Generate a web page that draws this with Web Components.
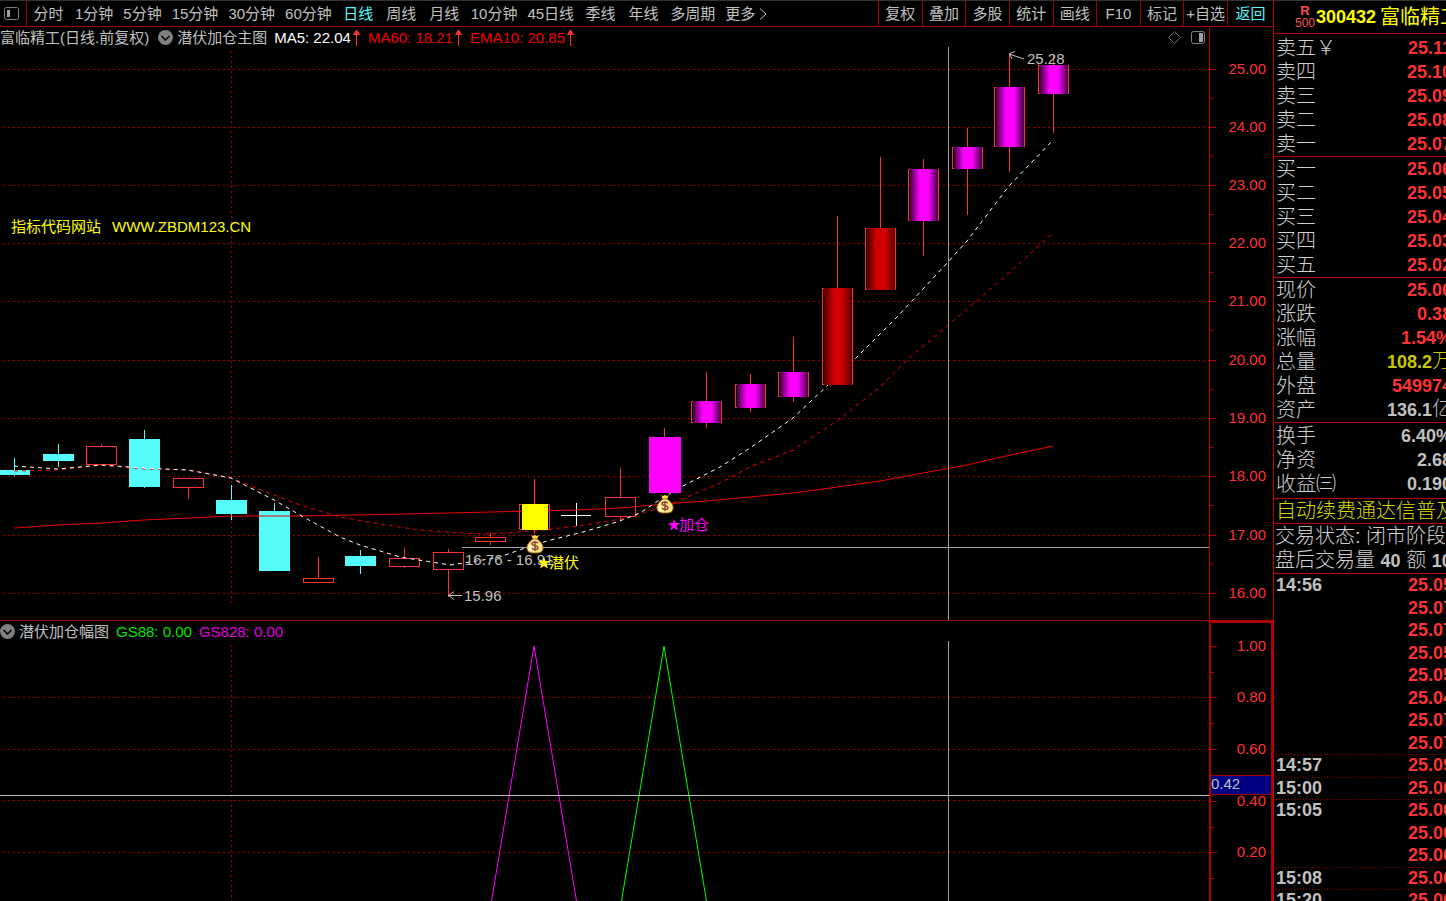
<!DOCTYPE html>
<html lang="zh-CN">
<head>
<meta charset="utf-8">
<title>富临精工 300432</title>
<style>
    html, body {
        margin: 0;
        height: 100%;
        background: #000;
        overflow: hidden;
    }
    body {
        font-family: "Liberation Sans", "Noto Sans CJK SC", sans-serif;
        font-size: 15px;
        font-weight: 400;
        color: #c0c0c0;
    }
</style>
</head>
<body>
<trade-app></trade-app>

<script>
const define = (name, cls) => customElements.define(name, cls);

class PeriodBar extends HTMLElement {
    constructor() {
        super();
        this.attachShadow({ mode: 'open' });
        this.periods = ['分时', '1分钟', '5分钟', '15分钟', '30分钟', '60分钟', '日线', '周线',
            '月线', '10分钟', '45日线', '季线', '年线', '多周期', '更多'];
        this.tools = ['复权', '叠加', '多股', '统计', '画线', 'F10', '标记', '+自选', '返回'];
    }

    connectedCallback() {
        this.shadowRoot.innerHTML = `
            <style>
                :host {
                    display: flex;
                    height: 27px;
                    box-sizing: border-box;
                    border-top: 1px solid #333;
                    border-bottom: 1px solid #a00000;
                }
                button {
                    border: 0;
                    padding: 0 5px;
                    background: none;
                    color: inherit;
                    font: inherit;
                    line-height: 24px;
                    white-space: nowrap;
                    cursor: pointer;
                }
                .layout {
                    width: 26px;
                    padding: 0 4px;
                    flex: none;
                }
                .layout svg { display: block; }
                nav {
                    flex: 1;
                    display: flex;
                    min-width: 0;
                    overflow: hidden;
                    border-left: 1px solid #a00000;
                }
                nav button { min-width: 43px; }
                .more { display: flex; align-items: center; gap: 4px; }
                .tools {
                    display: grid;
                    grid-template-columns: repeat(8, 1fr) 46px;
                    flex: 0 0 395px;
                }
                .tools button {
                    padding: 0;
                    border-left: 1px solid #a00000;
                }
                .on { color: #54fcfc; }
            </style>
            <button class="layout" aria-label="布局">
                <svg width="16" height="24" fill="none" stroke="#808080">
                    <rect x=".5" y="5.5" width="14" height="12" rx="2"/>
                    <rect x="3" y="8" width="3" height="7" fill="#a0a0a0" stroke="none"/>
                </svg>
            </button>
            <nav>${this.periods.map(p => this.renderPeriod(p)).join('')}</nav>
            <div class="tools">
                ${this.tools.map(t => `<button class="${t === '返回' ? 'on' : ''}">${t}</button>`).join('')}
            </div>
        `;
    }

    renderPeriod(p) {
        if (p === '更多') {
            return `<button class="more">更多<svg width="8" height="14" fill="none" stroke="#c0c0c0"><path d="M1 1.500L7 7L1 12.500"/></svg></button>`;
        }
        return `<button class="${p === '日线' ? 'on' : ''}">${p}</button>`;
    }
}
define('period-bar', PeriodBar);

// title row and plot on the left, value axis on the right
class ChartPanel extends HTMLElement {
    constructor() {
        super();
        this.attachShadow({ mode: 'open' });
        this.shadowRoot.innerHTML = `
            <style>
                :host { display: flex; min-height: 0; overflow: hidden; }
                .left { flex: 1; min-width: 0; display: flex; flex-direction: column; }
                header {
                    display: flex;
                    align-items: center;
                    height: 20px;
                    line-height: 20px;
                    padding-top: 1px;
                    box-sizing: border-box;
                    white-space: nowrap;
                }
                .plot { flex: 1; min-height: 0; }
            </style>
            <div class="left">
                <header><slot name="title"></slot></header>
                <div class="plot"><slot></slot></div>
            </div>
            <slot name="axis"></slot>
        `;
    }
}
define('chart-panel', ChartPanel);

class IndicatorMenu extends HTMLElement {
    constructor() {
        super();
        this.attachShadow({ mode: 'open' });
        this.shadowRoot.innerHTML = `
            <style>
                :host { display: block; }
                button {
                    display: flex;
                    align-items: center;
                    gap: 4px;
                    border: 0;
                    padding: 0;
                    background: none;
                    color: inherit;
                    font: inherit;
                    line-height: 20px;
                    cursor: pointer;
                }
            </style>
            <button>
                <svg width="15" height="15">
                    <circle cx="7.500" cy="7.500" r="7.500" fill="#808080"/>
                    <path d="M3.500 6L7.500 10L11.500 6" fill="none" stroke="#000" stroke-width="1.500"/>
                </svg>
                <slot></slot>
            </button>
        `;
    }
}
define('indicator-menu', IndicatorMenu);

class IndicatorValue extends HTMLElement {
    constructor() {
        super();
        this.attachShadow({ mode: 'open' });
        this.shadowRoot.innerHTML = `
            <style>
                :host { display: flex; align-items: center; gap: 1px; margin-left: 7px; }
                svg { display: none; }
                :host([up]) svg { display: block; }
            </style>
            <slot></slot>
            <svg width="9" height="18"><path d="M4.500 2V17M1.500 5.500H7.500L4.500 1Z" fill="#ff3232" stroke="#ff3232"/></svg>
        `;
    }
}
define('indicator-value', IndicatorValue);

class WindowIcons extends HTMLElement {
    constructor() {
        super();
        this.attachShadow({ mode: 'open' });
        this.shadowRoot.innerHTML = `
            <style>
                :host { display: flex; align-items: center; gap: 8px; margin-left: auto; padding-right: 3px; }
                button { border: 0; padding: 0; background: none; cursor: pointer; }
                svg { display: block; }
            </style>
            <button aria-label="标记"><svg width="15" height="15" fill="none" stroke="#707070"><path d="M7.500 1.500L13.500 7.500L7.500 13.500L1.500 7.500Z"/></svg></button>
            <button aria-label="侧栏"><svg width="16" height="15" fill="none" stroke="#808080"><rect x="1.500" y="1.500" width="13" height="12" rx="2"/><rect x="9" y="3" width="4" height="9" fill="#a0a0a0" stroke="none"/></svg></button>
        `;
    }
}
define('window-icons', WindowIcons);

const GRID = 'stroke="#a00000" stroke-dasharray="2 3"';

// every candle: kind, centre x, high, body top, body bottom, low
const CANDLES = [
    ['down', 14, 458, 470, 475, 476],
    ['down', 58, 444, 454, 461, 467],
    ['up', 101, 444, 446, 465, 465],
    ['down', 144, 430, 439, 487, 488],
    ['up', 188, 478, 478, 488, 499],
    ['down', 231, 485, 500, 514, 520],
    ['down', 274, 503, 511, 571, 571],
    ['up', 318, 557, 578, 583, 583],
    ['down', 360, 550, 556, 566, 574],
    ['up', 404, 548, 558, 567, 568],
    ['up', 448, 549, 552, 570, 597],
    ['up', 490, 533, 537, 542, 545],
    ['ambush', 534, 479, 504, 530, 534],
    ['flat', 576, 503, 515, 515, 526],
    ['up', 620, 468, 497, 517, 521],
    ['add', 664, 428, 437, 493, 493],
    ['hold', 706, 372, 401, 423, 428],
    ['hold', 750, 374, 384, 408, 412],
    ['hold', 793, 337, 372, 397, 402],
    ['surge', 837, 216, 288, 385, 385],
    ['surge', 880, 157, 228, 290, 290],
    ['hold', 923, 159, 169, 221, 256],
    ['hold', 967, 128, 147, 169, 215],
    ['hold', 1009, 53, 87, 147, 172],
    ['hold', 1053, 54, 65, 94, 133]
];

const MA5 = '14,466 58,469 101,465 144,468 188,470 231,478 274,500 307,519 340,537 360,545 400,557 450,565 477,561 500,557 525,548 547,541 583,532 617,522 640,513 664,497 681,487 720,467 750,448 793,418 827,386 854,360 898,316 948,262 967,241 1009,186 1053,140';
const EMA10 = '14,471 58,470 101,465 144,469 188,470 231,478 274,495 300,505 340,517 380,524 420,530 460,533 490,534 534,531 577,526 604,522 620,519 664,507 680,500 720,483 750,467 793,450 837,421 880,387 907,360 960,315 1000,281 1053,233';
const MA60 = '14,528 58,525 101,523 144,520 188,518 231,516 300,516 404,514 490,512 534,511 577,510 620,508 664,504 706,501 750,497 793,493 837,487 880,481 923,473 967,465 1010,455 1053,446';

class PriceChart extends HTMLElement {
    constructor() {
        super();
        this.attachShadow({ mode: 'open' });
    }

    connectedCallback() {
        this.shadowRoot.innerHTML = `
            <style>
                :host { display: block; height: 100%; }
                svg { display: block; width: 100%; height: 100%; }
                text { fill: #c0c0c0; font-size: 15px; }
                .up { stroke: #ff3232; fill: none; }
                .down { stroke: #54fcfc; }
            </style>
            <svg>
                <defs>
                    <linearGradient id="hold">
                        <stop offset="0" stop-color="#400040"/>
                        <stop offset=".35" stop-color="#f0f"/>
                        <stop offset=".65" stop-color="#f0f"/>
                        <stop offset="1" stop-color="#400040"/>
                    </linearGradient>
                    <linearGradient id="surge">
                        <stop offset="0" stop-color="#500000"/>
                        <stop offset=".35" stop-color="#d00000"/>
                        <stop offset=".65" stop-color="#d00000"/>
                        <stop offset="1" stop-color="#500000"/>
                    </linearGradient>
                    <g id="bag">
                        <path d="M-4 -10L-2 -9L0 -10L2 -9L4 -10L2 -6H-2Z" fill="#ffe040"/>
                        <path d="M-2 -6H2C5 -4 9 0 8 4C7 8 4 8 0 8C-4 8 -7 8 -8 4C-9 0 -5 -4 -2 -6Z" fill="#ffe680" stroke="#a06020"/>
                        <path d="M-5 0C-6 3 -5 5 -3 6" fill="none" stroke="#fff8d0" stroke-width="2"/>
                        <path d="M3 -2C2 -3 -3 -4 -3 -1C-3 1 3 0 3 3C3 5 -2 5 -3 3M0 -4V6" fill="none" stroke="#8a4a40" stroke-width="1.500"/>
                    </g>
                    <path id="star" d="M0 -6L1.500 -2H6L2.500 1L4 5.500L0 3L-4 5.500L-2.500 1L-6 -2H-1.500Z"/>
                </defs>
                <g transform="translate(0 -47)">
                    ${[69, 127, 185, 243, 301, 360, 418, 476, 535, 593].map(y =>
                        `<line x1="3" x2="100%" y1="${y}.5" y2="${y}.5" ${GRID}/>`).join('')}
                    <line x1="231.500" x2="231.500" y1="51" y2="604" ${GRID}/>
                    ${CANDLES.map(c => this.renderCandle(...c)).join('')}
                    <polyline points="${MA60}" fill="none" stroke="#f00000"/>
                    <polyline points="${EMA10}" fill="none" stroke="#f00000" stroke-dasharray="4 4"/>
                    <polyline points="${MA5}" fill="none" stroke="#fff" stroke-dasharray="4 4"/>
                    ${CANDLES.map(c => this.renderBody(...c)).join('')}
                    <text x="11" y="232" style="fill:#ff0">指标代码网站</text>
                    <text x="112" y="232" style="fill:#ff0">WWW.ZBDM123.CN</text>
                    <line x1="462" x2="100%" y1="547.500" y2="547.500" stroke="#a0a0a0"/>
                    <line x1="948.500" x2="948.500" y1="47" y2="621" stroke="#a0a0a0"/>
                    <path d="M462 595.500H448M454 591.500L448.500 595.500L454 599.500M1024 59L1009 54M1015 51.500L1009.500 53.500L1012 59" fill="none" stroke="#c0c0c0"/>
                    <text x="464" y="601">15.96</text>
                    <text x="465" y="565">16.76 - 16.91</text>
                    <text x="1027" y="64">25.28</text>
                    <use href="#bag" x="535" y="545"/>
                    <use href="#bag" x="665" y="505"/>
                    <use href="#star" x="544" y="563" fill="#ff0"/>
                    <text x="549" y="568" style="fill:#ff0">潜伏</text>
                    <use href="#star" x="674" y="525" fill="#f0f"/>
                    <text x="679" y="530" style="fill:#f0f">加仓</text>
                </g>
            </svg>
        `;
    }

    renderCandle(kind, x, high, top, bottom, low) {
        const cx = x + 0.5;
        if (kind === 'flat') {
            return `<path d="M${cx} ${high}V${low}M561 ${top}.5H591" stroke="#fff"/>`;
        }
        const cls = kind === 'down' ? 'down' : 'up';
        return `
            <path class="${cls}" d="M${cx} ${high}V${top}M${cx} ${bottom}V${low}"/>
            <rect class="${cls}" x="${x - 14.5}" y="${top}.5" width="30" height="${bottom - top - 1}" ${cls === 'down' ? 'fill="#54fcfc"' : ''}/>
        `;
    }

    // signal bodies are filled over the average lines
    renderBody(kind, x, high, top, bottom) {
        const fill = { hold: 'url(#hold)', surge: 'url(#surge)', add: '#f0f', ambush: '#ff0' }[kind];
        const half = { hold: 13, surge: 13, add: 15, ambush: 12 }[kind];
        if (!fill) {
            return '';
        }
        return `<rect x="${x - half}" y="${top}" width="${half * 2 + 2}" height="${bottom - top}" fill="${fill}"/>`;
    }
}
define('price-chart', PriceChart);

class SignalChart extends HTMLElement {
    constructor() {
        super();
        this.attachShadow({ mode: 'open' });
    }

    connectedCallback() {
        this.shadowRoot.innerHTML = `
            <style>
                :host { display: block; height: 100%; }
                svg { display: block; width: 100%; height: 100%; }
            </style>
            <svg fill="none">
                ${[56, 108, 159, 211].map(y => `<line x1="3" x2="100%" y1="${y}.5" y2="${y}.5" ${GRID}/>`).join('')}
                <line x1="231.500" x2="231.500" y1="4" y2="100%" ${GRID}/>
                <polyline points="491,263 534,5 577,263" stroke="#f0f"/>
                <polyline points="621,263 664,5 707,263" stroke="#0f0"/>
                <line x1="0" x2="100%" y1="154.500" y2="154.500" stroke="#c0c0c0"/>
                <line x1="948.500" x2="948.500" y1="0" y2="100%" stroke="#a0a0a0"/>
            </svg>
        `;
    }
}
define('signal-chart', SignalChart);

class ValueAxis extends HTMLElement {
    constructor() {
        super();
        this.attachShadow({ mode: 'open' });
    }

    connectedCallback() {
        // "label@y" pairs, y counted from the top of the panel
        const marks = this.getAttribute('marks').split(' ').map(m => m.split('@'));
        const half = Number(this.getAttribute('half'));
        const cursor = this.getAttribute('cursor');
        this.shadowRoot.innerHTML = `
            <style>
                :host {
                    display: block;
                    position: relative;
                    flex: 0 0 64px;
                    box-sizing: border-box;
                    border-left: 1px solid #c00000;
                }
                :host([boxed]) { border: 2px solid #b00000; border-bottom: 0; }
                svg { display: block; width: 100%; height: 100%; overflow: visible; }
                text { fill: #ff3232; font-size: 15px; text-anchor: end; }
                output {
                    position: absolute;
                    left: 0;
                    right: 0;
                    top: 152px;
                    height: 18px;
                    line-height: 16px;
                    border: 1px solid #a00000;
                    border-width: 1px 0;
                    background: #000080;
                    color: #c0c0c0;
                }
            </style>
            <svg>
                ${marks.map(([label, y]) => `
                    <path d="M0 ${y}.5H6M0 ${Number(y) + half}.5H3" stroke="#c00000"/>
                    <text x="${this.hasAttribute('boxed') ? 55 : 56}" y="${Number(y) + 5}">${label}</text>
                `).join('')}
            </svg>
            ${cursor ? `<output>${cursor}</output>` : ''}
        `;
    }
}
define('value-axis', ValueAxis);

// a block of label / value rows
class QuoteTable extends HTMLElement {
    constructor() {
        super();
        this.attachShadow({ mode: 'open' });
    }

    connectedCallback() {
        const rows = this.getAttribute('rows').split(' ').map(r => r.split('|'));
        this.shadowRoot.innerHTML = `
            <style>
                :host { display: block; border-bottom: 1px solid #c00000; }
                table { width: 176px; margin-left: 2px; border-spacing: 0; }
                tr { height: 24px; }
                th, td { padding: 0; line-height: 24px; white-space: nowrap; }
                th { font-size: 20px; font-weight: 300; text-align: left; color: #d0d0d0; }
                td { font-size: 18px; font-weight: 700; text-align: right; color: #ff3232; }
                i { font-style: normal; font-weight: 300; font-size: 20px; line-height: 20px; }
                .yellow { color: #c8c800; }
                .grey { color: #c0c0c0; }
            </style>
            <table>
                ${rows.map(([name, value, color]) => `
                    <tr><th scope="row">${name}</th><td class="${color || ''}">${value.replace(/[万亿]/, '<i>$&</i>')}</td></tr>
                `).join('')}
            </table>
        `;
    }
}
define('quote-table', QuoteTable);

class TickList extends HTMLElement {
    constructor() {
        super();
        this.attachShadow({ mode: 'open' });
        this.ticks = [['14:56', '25.05'], ['', '25.07'], ['', '25.07'], ['', '25.05'], ['', '25.05'],
            ['', '25.04'], ['', '25.07'], ['', '25.07'], ['14:57', '25.09'], ['15:00', '25.06'],
            ['15:05', '25.06'], ['', '25.06'], ['', '25.06'], ['15:08', '25.06'], ['15:20', '25.06']];
    }

    connectedCallback() {
        this.shadowRoot.innerHTML = `
            <style>
                :host { display: block; }
                table {
                    width: 177px;
                    margin-left: 2px;
                    border-spacing: 0;
                    font-size: 18px;
                    font-weight: 700;
                }
                tr { height: 23px; vertical-align: top; }
                tr:nth-child(even) { height: 22px; }
                tr.start { background: repeating-linear-gradient(90deg, #a00000 0 1px, transparent 1px 3px) top / 100% 1px no-repeat; }
                td { padding: 0; line-height: 22px; }
                td + td { text-align: right; color: #ff3232; }
            </style>
            <table>
                ${this.ticks.map(([time, price], i) => `<tr class="${time && i ? 'start' : ''}"><td>${time}</td><td>${price}</td></tr>`).join('')}
            </table>
        `;
    }
}
define('tick-list', TickList);

class QuoteBoard extends HTMLElement {
    constructor() {
        super();
        this.attachShadow({ mode: 'open' });
        this.shadowRoot.innerHTML = `
            <style>
                :host {
                    display: block;
                    box-sizing: border-box;
                    border-top: 1px solid #333;
                    border-left: 1px solid #c00000;
                    overflow: hidden;
                    white-space: nowrap;
                }
                header {
                    display: flex;
                    align-items: center;
                    height: 32px;
                    padding-left: 21px;
                    border-bottom: 1px solid #c00000;
                    color: #ff0;
                    font-size: 20px;
                    line-height: 30px;
                }
                .tag {
                    display: flex;
                    flex-direction: column;
                    align-items: center;
                    margin-right: 1px;
                    color: #ff5050;
                    font-size: 12px;
                    line-height: 13px;
                }
                b { font-size: 18px; font-weight: 700; }
                .tag b { font-size: 13px; }
                header > b { margin-right: 4px; }
                .asks { padding-top: 2px; }
                .stats { padding: 1px 0 2px; }
                p {
                    margin: 0;
                    padding-left: 1px;
                    border-bottom: 1px solid #c00000;
                    font-size: 20px;
                    font-weight: 300;
                    line-height: 24px;
                    color: #d0d0d0;
                }
                p b { color: #c0c0c0; }
                .notice { padding-left: 2px; color: #d8d800; }
            </style>
            <header><span class="tag"><b>R</b>500</span><b>300432</b>富临精工</header>
            <quote-table class="asks" rows="卖五￥|25.11 卖四|25.10 卖三|25.09 卖二|25.08 卖一|25.07"></quote-table>
            <quote-table rows="买一|25.06 买二|25.05 买三|25.04 买四|25.03 买五|25.02"></quote-table>
            <quote-table rows="现价|25.06 涨跌|0.38 涨幅|1.54% 总量|108.2万|yellow 外盘|549974 资产|136.1亿|grey"></quote-table>
            <quote-table class="stats" rows="换手|6.40%|grey 净资|2.68|grey 收益㈢|0.190|grey"></quote-table>
            <p class="notice">自动续费通达信普及</p>
            <p>交易状态: 闭市阶段<br>盘后交易量 <b>40</b> 额 <b>10</b></p>
            <tick-list></tick-list>
        `;
    }
}
define('quote-board', QuoteBoard);

class TradeApp extends HTMLElement {
    constructor() {
        super();
        this.attachShadow({ mode: 'open' });
        this.shadowRoot.innerHTML = `
            <style>
                :host {
                    display: grid;
                    grid-template-columns: minmax(0, 1fr) 173px;
                    height: 100vh;
                    overflow: hidden;
                }
                main { display: flex; flex-direction: column; min-height: 0; }
                .main-chart { flex: 1; border-bottom: 1px solid #a00000; }
                .sub-chart { flex: 0 0 280px; }
                .ma5 { color: #fff; }
                .red { color: #f00000; }
                .green { color: #00e000; }
                .purple { color: #e000e0; }
                .symbol { margin-right: 9px; }
            </style>
            <main>
                <period-bar></period-bar>
                <chart-panel class="main-chart">
                    <span slot="title" class="symbol">富临精工(日线.前复权)</span>
                    <indicator-menu slot="title">潜伏加仓主图</indicator-menu>
                    <indicator-value slot="title" class="ma5" up>MA5: 22.04</indicator-value>
                    <indicator-value slot="title" class="red" up>MA60: 18.21</indicator-value>
                    <indicator-value slot="title" class="red" up>EMA10: 20.85</indicator-value>
                    <window-icons slot="title"></window-icons>
                    <price-chart></price-chart>
                    <value-axis slot="axis" half="29" marks="25.00@42 24.00@100 23.00@158 22.00@216 21.00@274 20.00@333 19.00@391 18.00@449 17.00@508 16.00@566"></value-axis>
                </chart-panel>
                <chart-panel class="sub-chart">
                    <indicator-menu slot="title">潜伏加仓幅图</indicator-menu>
                    <indicator-value slot="title" class="green">GS88: 0.00</indicator-value>
                    <indicator-value slot="title" class="purple">GS828: 0.00</indicator-value>
                    <signal-chart></signal-chart>
                    <value-axis slot="axis" boxed half="26" cursor="0.42" marks="1.00@23 0.80@74 0.60@126 0.40@178 0.20@229"></value-axis>
                </chart-panel>
            </main>
            <quote-board></quote-board>
        `;
    }
}
define('trade-app', TradeApp);
</script>
</body>
</html>
